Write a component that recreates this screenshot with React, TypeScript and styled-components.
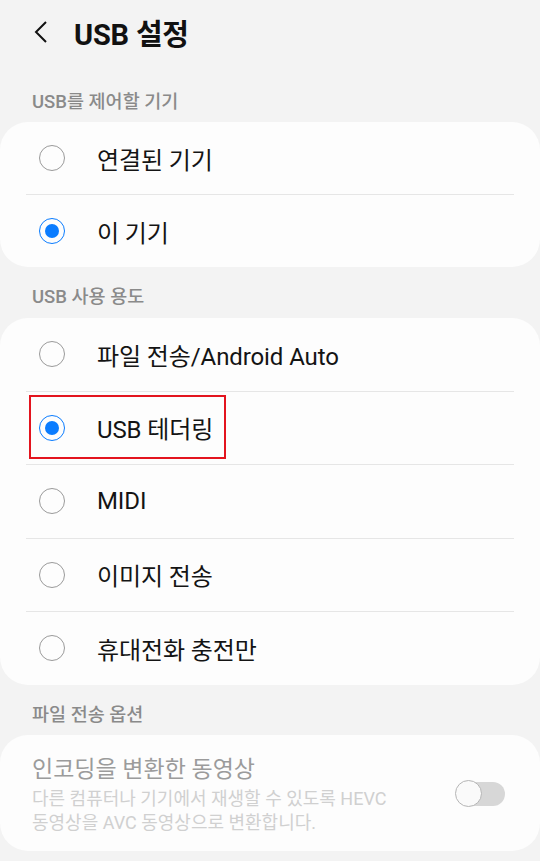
import React from 'react'
import styled, { createGlobalStyle, css } from 'styled-components'

const GlobalStyle = createGlobalStyle`
  html, body {
    margin: 0;
    padding: 0;
    background: #f3f3f3;
  }
  body {
    font-family: Roboto, "Noto Sans CJK KR", sans-serif;
    color: #111;
  }
`

const Screen = styled.div`
  width: 540px;
  min-height: 861px;
  background: #f3f3f3;
  overflow: hidden;
`

const TopBar = styled.header`
  display: flex;
  align-items: center;
  height: 64px;
  padding-left: 30px;
  box-sizing: border-box;
`

const BackButton = styled.button`
  display: flex;
  align-items: center;
  justify-content: center;
  width: 22px;
  height: 30px;
  padding: 0;
  border: 0;
  background: none;
  margin-right: 22px;
`

const Title = styled.h1`
  margin: 0;
  font-size: 29px;
  font-weight: 700;
  letter-spacing: -0.2px;
  color: #111;
`

const SectionLabel = styled.div<{ $top: number; $bottom: number }>`
  padding: ${p => p.$top}px 32px ${p => p.$bottom}px;
  font-size: 18.5px;
  line-height: 20px;
  font-weight: 500;
  color: #8a8a8a;
`

const Card = styled.section`
  background: #fdfdfd;
  border-radius: 28px;
  display: flex;
  flex-direction: column;
`

const Divider = styled.div`
  height: 1px;
  margin: 0 26px;
  background: #e6e6e6;
`

const Row = styled.label<{ $h: number }>`
  display: flex;
  align-items: center;
  height: ${p => p.$h}px;
  padding-left: 39px;
`

const Choice = styled.span<{ $marked?: boolean }>`
  position: relative;
  display: inline-flex;
  align-items: center;
  gap: 32px;
  ${p =>
    p.$marked &&
    css`
      &::after {
        content: '';
        position: absolute;
        left: -10px;
        right: -13px;
        top: -15px;
        bottom: -14px;
        border: 2px solid #e3141e;
        pointer-events: none;
      }
    `}
`

const Radio = styled.span<{ $on?: boolean }>`
  box-sizing: border-box;
  width: 26px;
  height: 26px;
  border-radius: 50%;
  border: 1.5px solid ${p => (p.$on ? '#0a7cff' : '#9a9a9a')};
  display: flex;
  align-items: center;
  justify-content: center;
  flex-shrink: 0;
  &::before {
    content: '';
    width: 14px;
    height: 14px;
    border-radius: 50%;
    background: #0a7cff;
    display: ${p => (p.$on ? 'block' : 'none')};
  }
`

const ChoiceText = styled.span`
  font-size: 24px;
  color: #141414;
  letter-spacing: -0.1px;
`

const OptionRow = styled.div`
  display: flex;
  align-items: center;
  justify-content: space-between;
  padding: 18px 35px 16px 32px;
`

const OptionText = styled.div`
  display: flex;
  flex-direction: column;
`

const OptionTitle = styled.div`
  font-size: 23px;
  line-height: 34px;
  color: #9b9b9b;
`

const OptionDesc = styled.div`
  font-size: 18px;
  line-height: 24px;
  color: #d0d0d0;
  max-width: 365px;
`

const Toggle = styled.span`
  position: relative;
  width: 50px;
  height: 27px;
  flex-shrink: 0;
  &::before {
    content: '';
    position: absolute;
    left: 6px;
    right: 0;
    top: 2px;
    bottom: 1px;
    border-radius: 12px;
    background: #d7d7d7;
  }
  &::after {
    content: '';
    position: absolute;
    left: 0;
    top: 0;
    width: 27px;
    height: 27px;
    box-sizing: border-box;
    border-radius: 50%;
    background: #fafafa;
    border: 1.5px solid #b5b5b5;
  }
`

type Opt = { label: string; on?: boolean; marked?: boolean }

const controllers: Opt[] = [{ label: '연결된 기기' }, { label: '이 기기', on: true }]

const usages: Opt[] = [
  { label: '파일 전송/Android Auto' },
  { label: 'USB 테더링', on: true, marked: true },
  { label: 'MIDI' },
  { label: '이미지 전송' },
  { label: '휴대전화 충전만' },
]

function RadioList({ items, rowH }: { items: Opt[]; rowH: number }) {
  return (
    <Card>
      {items.map((it, i) => (
        <React.Fragment key={it.label}>
          {i > 0 && <Divider />}
          <Row $h={rowH}>
            <Choice $marked={it.marked}>
              <Radio $on={it.on} />
              <ChoiceText>{it.label}</ChoiceText>
            </Choice>
          </Row>
        </React.Fragment>
      ))}
    </Card>
  )
}

export default function App() {
  return (
    <Screen>
      <GlobalStyle />
      <TopBar>
        <BackButton aria-label="뒤로">
          <svg width="16" height="24" viewBox="0 0 16 24">
            <polyline points="13,2 3,12 13,22" fill="none" stroke="#111" strokeWidth="2" strokeLinejoin="miter" />
          </svg>
        </BackButton>
        <Title>USB 설정</Title>
      </TopBar>

      <SectionLabel $top={28} $bottom={10}>USB를 제어할 기기</SectionLabel>
      <RadioList items={controllers} rowH={72} />

      <SectionLabel $top={20} $bottom={11}>USB 사용 용도</SectionLabel>
      <RadioList items={usages} rowH={72.5} />

      <SectionLabel $top={20} $bottom={10}>파일 전송 옵션</SectionLabel>
      <Card>
        <OptionRow>
          <OptionText>
            <OptionTitle>인코딩을 변환한 동영상</OptionTitle>
            <OptionDesc>다른 컴퓨터나 기기에서 재생할 수 있도록 HEVC 동영상을 AVC 동영상으로 변환합니다.</OptionDesc>
          </OptionText>
          <Toggle />
        </OptionRow>
      </Card>
    </Screen>
  )
}
